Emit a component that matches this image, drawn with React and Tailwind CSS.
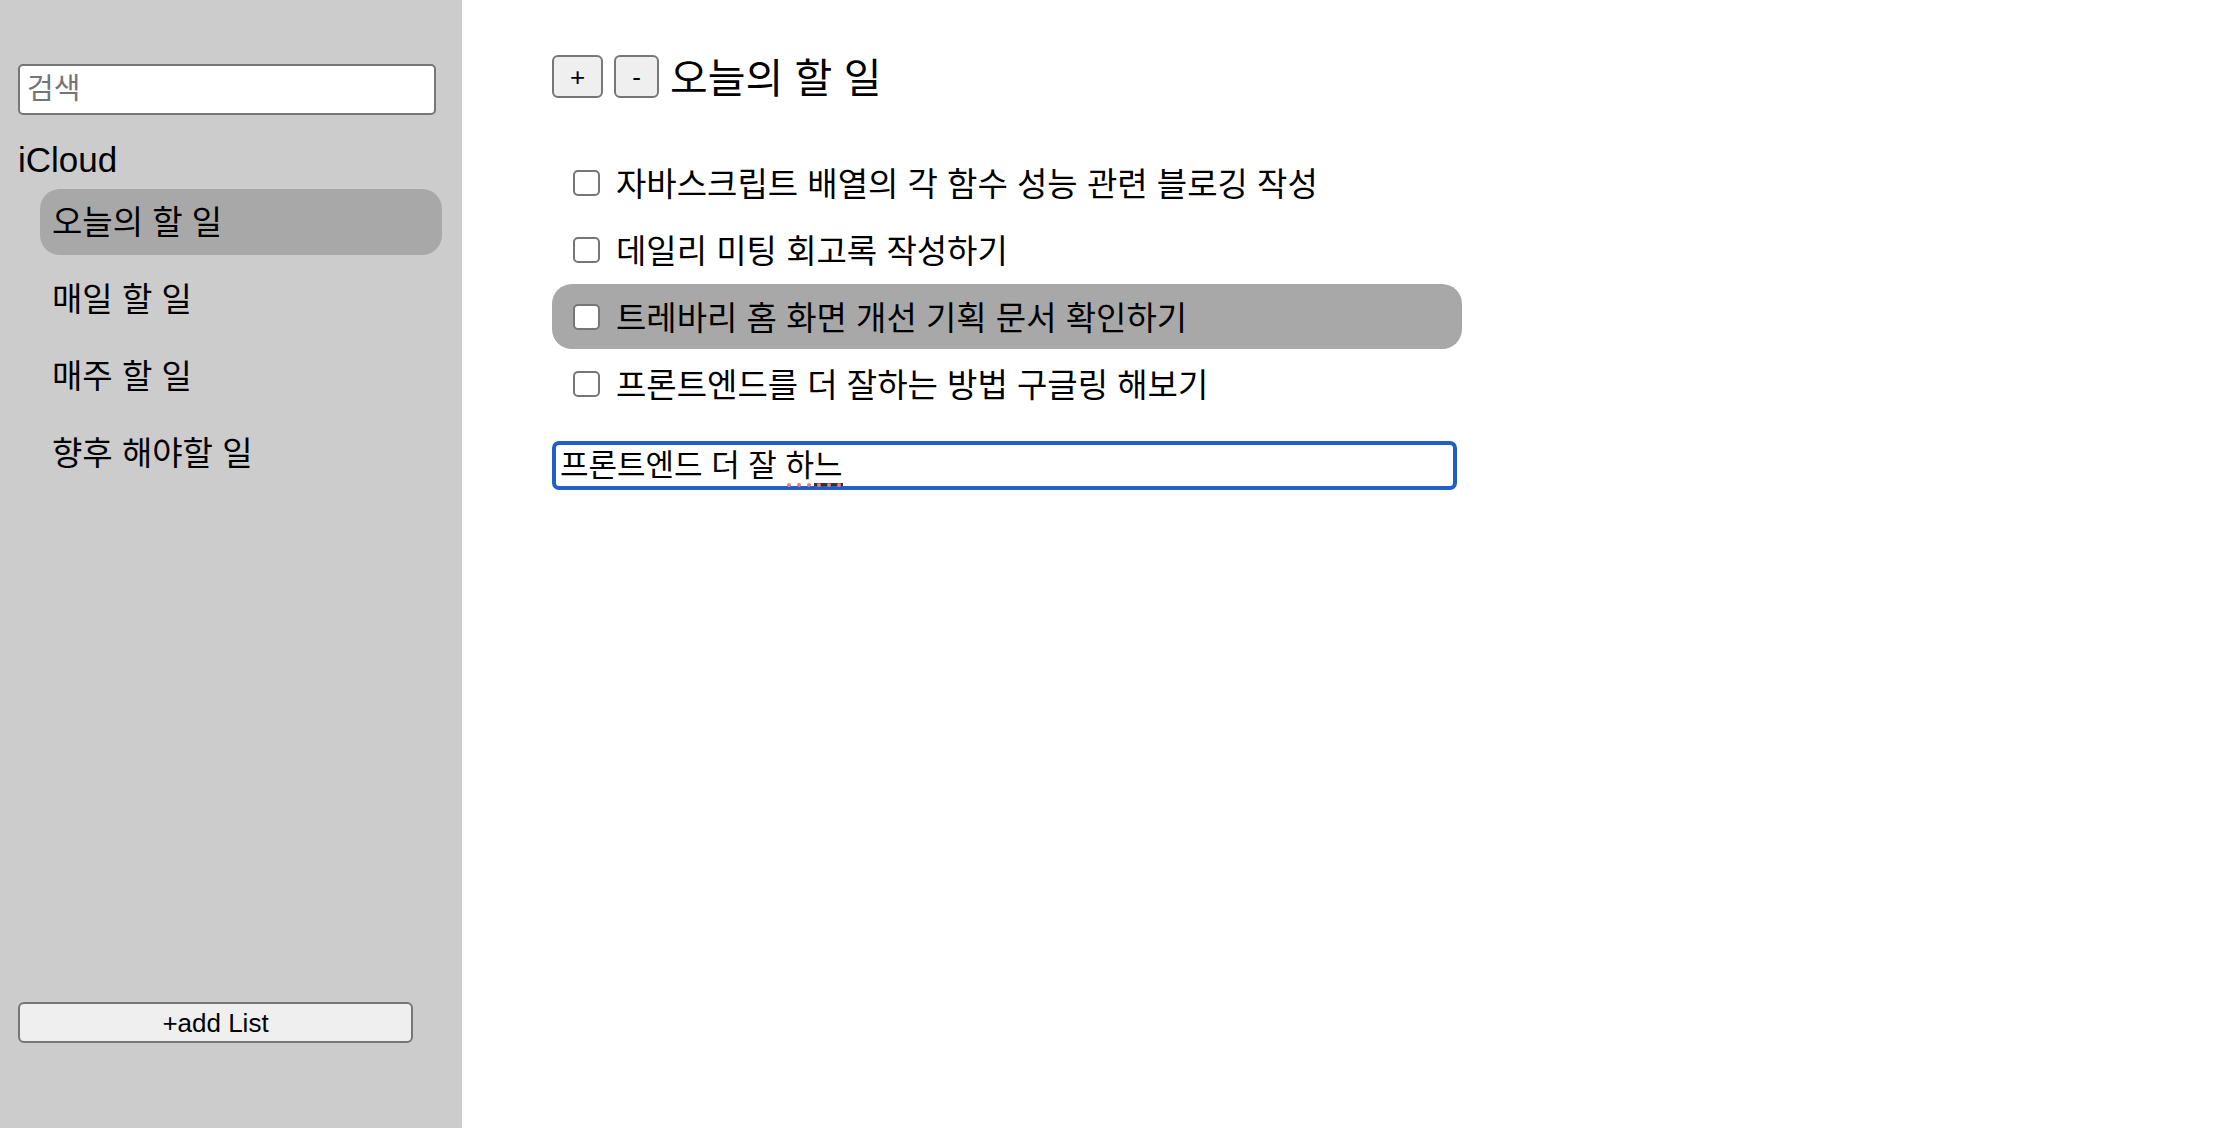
import { useState } from 'react';

const FONT = "font-['Liberation_Sans','Noto_Sans_CJK_KR',sans-serif]";

const lists = ['오늘의 할 일', '매일 할 일', '매주 할 일', '향후 해야할 일'];

const todos = [
  '자바스크립트 배열의 각 함수 성능 관련 블로깅 작성',
  '데일리 미팅 회고록 작성하기',
  '트레바리 홈 화면 개선 기획 문서 확인하기',
  '프론트엔드를 더 잘하는 방법 구글링 해보기',
];

const Sidebar = ({ active }) => (
  <aside className="w-[462px] h-[1128px] shrink-0 bg-[#cccccc] flex flex-col pl-[18px] pt-[64px] pb-[85px]">
    <div className="w-[418px] h-[51px] bg-white border-2 border-[#767676] rounded-[5px] flex items-center px-[7px]">
      <span className="text-[29px] text-[#757575] leading-none">검색</span>
    </div>

    <div className="text-[35px] leading-none mt-[27px] text-black">iCloud</div>

    <nav className="flex flex-col gap-[11px] mt-[12px] pl-[22px] pr-[20px]">
      {lists.map((label, i) => (
        <div
          key={label}
          className={`h-[66px] rounded-[20px] flex items-center px-[12px] pt-[2px] text-[33px] text-black ${
            i === active ? 'bg-[#a8a8a8]' : ''
          }`}
        >
          {label}
        </div>
      ))}
    </nav>

    <button className="mt-auto w-[395px] h-[41px] bg-[#efefef] border-2 border-[#767676] rounded-[6px] text-[26px] leading-none text-black">
      +add List
    </button>
  </aside>
);

const Checkbox = () => (
  <span className="w-[27px] h-[26px] shrink-0 bg-white border-2 border-[#767676] rounded-[5px]" />
);

export default function App() {
  const [selected] = useState(2);

  return (
    <div className={`${FONT} flex w-[2214px] h-[1128px] bg-white overflow-hidden`}>
      <Sidebar active={0} />

      <main className="flex-1 pl-[90px] pt-[55px]">
        <header className="flex items-center gap-[11px] h-[43px]">
          <button className="w-[51px] h-[43px] bg-[#efefef] border-2 border-[#767676] rounded-[6px] text-[26px] leading-none text-black">
            +
          </button>
          <button className="w-[45px] h-[43px] bg-[#efefef] border-2 border-[#767676] rounded-[6px] text-[26px] leading-none text-black">
            -
          </button>
          <h2 className="text-[41px] leading-none text-black mt-[6px]">오늘의 할 일</h2>
        </header>

        <ul className="flex flex-col gap-[2px] mt-[52px] w-[910px]">
          {todos.map((t, i) => (
            <li
              key={t}
              className={`h-[65px] rounded-[20px] flex items-center pl-[21px] gap-[16px] text-[33px] text-black ${
                i === selected ? 'bg-[#a8a8a8]' : ''
              }`}
            >
              <Checkbox />
              <span className="leading-none pt-[3px]">{t}</span>
            </li>
          ))}
        </ul>

        <div className="mt-[25px] w-[905px] h-[49px] border-[4px] border-[#1f5fc6] rounded-[7px] flex items-center px-[4px] text-[31px] text-black">
          <span className="leading-none whitespace-pre">프론트엔드 더 잘 </span>
          <span className="relative leading-none">
            하<span className="border-b-[3px] border-[#333333]">느</span>
            <span className="absolute left-0 right-0 bottom-[-6px] flex justify-between px-[2px]">
              {[0, 1, 2, 3, 4, 5].map((d) => (
                <span key={d} className="w-[4px] h-[4px] rounded-full bg-[#f07b70]" />
              ))}
            </span>
          </span>
        </div>
      </main>
    </div>
  );
}
